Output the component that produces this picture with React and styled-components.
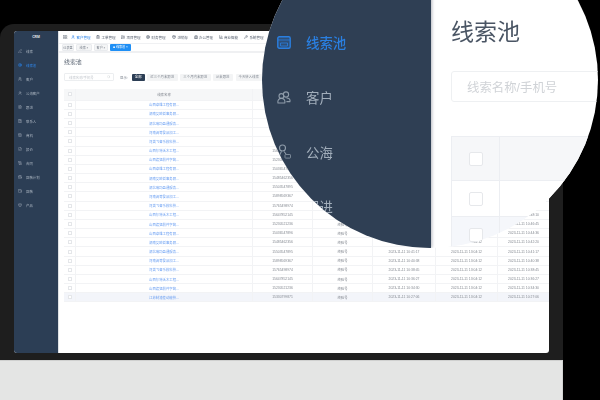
import React from "react";
import styled, { createGlobalStyle } from "styled-components";
import { Edit3, Target, Users, UserRound, FileText, Contact, Briefcase, FileCheck, ScrollText, CalendarClock, Wallet, Box, LayoutGrid, User, ClipboardList, FolderKanban, CircleDollarSign, Package, Building2, BarChart3, Wrench, Search } from "lucide-react";

const Global = createGlobalStyle`
  html, body { margin: 0; padding: 0; width: 600px; height: 400px; overflow: hidden; background: #000; }
  body { font-family: "Liberation Sans", "Noto Sans CJK SC", sans-serif; }
  * { box-sizing: border-box; }
`;

const Stage = styled.div`
  position: relative; width: 600px; height: 400px; overflow: hidden; background: #000;
  display: flex; flex-direction: column; padding-top: 24px;
`;
const Laptop = styled.div`
  width: 563px; height: 336px; flex: none; background: #1e1e1e; border-radius: 14px 14px 0 0;
  padding: 7px 14px;
`;
const Base = styled.div`
  width: 563px; flex: 1; background: #e4e5e4; border-top: 1px solid #cfd0cf; border-right: 1px solid #d2d3d2;
`;
const Screen = styled.div`
  width: 535px; height: 322px; display: flex; background: #fff; border-radius: 3px; overflow: hidden;
  filter: blur(0.5px);
`;
const Side = styled.div`
  width: 44px; flex: none; background: #2c3e55; padding-top: 3px; display: flex; flex-direction: column;
`;
const Logo = styled.div`
  height: 7px; line-height: 7px; font-size: 3.4px; font-weight: 700; color: #e6e9ee; text-align: center; margin-bottom: 3px;
`;
const SideItem = styled.div`
  height: 14px; display: flex; align-items: center; gap: 4px; padding-left: 4px; font-size: 3.4px;
  color: ${p => (p.$active ? "#2f86ea" : "#aab4c0")};
`;
const Main = styled.div`
  flex: 1; min-width: 0; display: flex; flex-direction: column; border-left: 1px solid #dfe1e4;
`;
const TopNav = styled.div`
  height: 12px; display: flex; align-items: center; padding-left: 4px; font-size: 3.5px; color: #5a6371; flex: none;
`;
const NavLink = styled.div`
  width: ${p => p.$w}px; display: flex; align-items: center; gap: 1.5px; flex: none;
  color: ${p => (p.$active ? "#2f86ea" : "#5a6371")};
`;
const Tags = styled.div`
  height: 10px; display: flex; align-items: center; padding-left: 3px; border-top: 1px solid #f0f1f3;
  border-bottom: 2px solid #eff0f2; flex: none;
`;
const Tag = styled.div`
  height: 7px; line-height: 7px; width: ${p => p.$w}px; margin-right: 2px; text-align: center; font-size: 3.1px; border-radius: 1px; flex: none;
  background: ${p => (p.$active ? "#1f8ff5" : "#f4f5f6")};
  color: ${p => (p.$active ? "#fff" : "#7a818c")};
  border: ${p => (p.$active ? "none" : "0.5px solid #e9ebee")};
`;
const Body = styled.div`
  padding: 5px 0 0 5px; display: flex; flex-direction: column;
`;
const Title = styled.div`
  font-size: 5.9px; line-height: 9px; color: #5a6472;
`;
const Filters = styled.div`
  margin-top: 6px; display: flex; align-items: center; height: 8px; font-size: 3.4px; color: #7a818c;
`;
const SearchBox = styled.div`
  width: 50px; height: 8px; border: 0.5px solid #eceef0; border-radius: 1px; color: #c5c9cf;
  display: flex; align-items: center; justify-content: space-between; padding: 0 3px 0 4px; margin-right: 6px;
`;
const Chip = styled.div`
  height: 7px; line-height: 7px; margin-left: ${p => p.$ml || 2}px; width: ${p => p.$w}px; text-align: center; border-radius: 1px; flex: none;
  background: ${p => (p.$active ? "#2c3e55" : "#f3f4f5")};
  color: ${p => (p.$active ? "#fff" : "#8a9099")};
`;
const Table = styled.div`
  margin-top: 8px; width: 486px;
`;
const Row = styled.div`
  display: grid; grid-template-columns: 12px 177px 60px 60px 63px 62px 52px;
  height: ${p => (p.$head ? "11.7px" : "9.18px")};
  background: ${p => (p.$head ? "#f6f7f8" : p.$hl ? "#f3f5fa" : "#fff")};
  border-bottom: 0.5px solid #f2f3f5;
`;
const Cell = styled.div`
  display: flex; align-items: center; justify-content: center; font-size: 3.4px; white-space: nowrap;
  border-right: 0.5px solid #f2f3f5; color: ${p => (p.$link ? "#6a9ff2" : "#858a92")};
`;
const Box1 = styled.span`
  width: 4px; height: 4px; border: 0.5px solid #e4e6e9; background: #fff; border-radius: 0.5px;
`;

const Lens = styled.div`
  position: absolute; left: 262px; top: -88px; width: 336px; height: 336px; border-radius: 50%; overflow: hidden;
  display: flex; background: #fff; filter: blur(0.35px);
`;
const LensSide = styled.div`
  width: 169px; flex: none; background: #2f3f54; padding: 103px 0 0 15px; box-shadow: 1px 0 3px rgba(40,50,70,.35);
`;
const LensItem = styled.div`
  height: 54.7px; display: flex; align-items: center; gap: 15px; font-size: 13.4px; font-weight: ${p => (p.$active ? 500 : 400)};
  color: ${p => (p.$active ? "#2a7fe0" : "#a2aebb")};
`;
const LensBody = styled.div`
  flex: 1; padding: 105px 0 0 20px; min-width: 0;
`;
const LensTitle = styled.div`
  font-size: 23px; line-height: 30px; color: #4a5564; white-space: nowrap;
`;
const LensInput = styled.div`
  margin-top: 24px; width: 200px; height: 31px; border: 1px solid #eef0f2; border-radius: 3px; padding-left: 15px;
  display: flex; align-items: center; font-size: 12.4px; color: #d0d3d7; white-space: nowrap;
`;
const LensTable = styled.div`
  margin-top: 34px; width: 200px; border-top: 1.5px solid #eceef2; border-left: 1.5px solid #eceef2;
`;
const LensRow = styled.div`
  height: ${p => p.$h}px; display: grid; grid-template-columns: 48px 1fr;
  background: ${p => p.$bg}; border-bottom: 1.5px solid #eceef2;
`;
const LensCheckCell = styled.div`
  display: flex; align-items: center; justify-content: center; border-right: 1.5px solid #eceef2;
`;
const LensCheck = styled.span`
  width: 14px; height: 14px; background: #fff; border: 1.5px solid #e6e8eb; border-radius: 2px;
`;

const sideItems = [
  ["线索", Edit3], ["线索池", Target, true], ["客户", Users], ["公海客户", UserRound], ["跟进", FileText], ["联系人", Contact],
  ["商机", Briefcase], ["报价", FileCheck], ["合同", ScrollText], ["回款计划", CalendarClock], ["回款", Wallet], ["产品", Box],
];
const navItems = [
  ["客户管理", User, 25, true], ["工单管理", ClipboardList, 25], ["项目管理", FolderKanban, 25], ["财务管理", CircleDollarSign, 26],
  ["进销存", Package, 21.5], ["办公管理", Building2, 25], ["商业智能", BarChart3, 25.4], ["系统管理", Wrench, 25],
];
const names = ["山西卓雄工程有限...", "湖南艾欧哲事务限...", "湖北瑞玛盈通服务...", "河南调等食品加工...", "河类飞奋乐模科技...", "山西尔特沃木工程...", "山西渡猛前件字筑..."];
const phones = ["15503547895", "15898569367", "15765498974", "15647852145", "15230521236", "15036547896", "15485462356"];
const t1 = ["10:48:10", "10:46:45", "10:44:36", "10:42:20", "10:41:17", "10:40:38", "10:38:45", "10:36:27", "10:34:30", "10:32:39", "10:31:28", "10:27:06"];
const rows = Array.from({ length: 22 }, (_, i) => {
  const last = i === 21;
  const time = last ? t1[11] : t1[i % 12];
  return {
    name: last ? "江苏制速差动能技..." : names[i % 7],
    phone: last ? "15330799871" : phones[(i + 5) % 7],
    a: `2023-11-11 ${time}`,
    b: "2023-11-11 13:04:12",
    c: `2023-11-11 ${time}`,
    hl: last,
    covered: i < 12,
  };
});

const PanelIcon = () => (
  <svg width="14" height="13" viewBox="0 0 14 13" fill="rgba(42,127,224,.25)" stroke="#2a7fe0" strokeWidth="1.4">
    <rect x=".8" y=".8" width="12.4" height="11.4" rx="1.5" />
    <path d="M.8 4h12.4M3.5 7h7v3h-7z" strokeWidth=".8" fill="none" />
  </svg>
);
const GroupIcon = () => (
  <svg width="14" height="13" viewBox="0 0 14 13" fill="none" stroke="#8f9caa" strokeWidth="1.1">
    <circle cx="9" cy="3.5" r="2.6" />
    <circle cx="4.4" cy="5" r="2.4" />
    <path d="M1 12c-.6-3 1-4.6 3.4-4.6S8.4 9 7.8 12zM9.5 7c2.4 0 4 1 3.4 3.6H9.4" />
  </svg>
);
const PinIcon = () => (
  <svg width="14" height="16" viewBox="0 0 14 16" fill="none" stroke="#8f9caa" strokeWidth="1.1">
    <circle cx="5.5" cy="4" r="3" />
    <path d="M4.5 7.2 1 14.5M7 7.5l2 2.5" />
    <rect x="8" y="10.5" width="5.5" height="3.6" rx=".6" strokeWidth=".8" />
  </svg>
);

export default function App() {
  return (
    <Stage>
      <Global />
      <Laptop>
        <Screen>
          <Side>
            <Logo>CRM</Logo>
            {sideItems.map(([label, Icon, active]) => (
              <SideItem key={label} $active={active}><Icon size={4} strokeWidth={2} />{label}</SideItem>
            ))}
          </Side>
          <Main>
            <TopNav>
              <NavLink $w={8}><LayoutGrid size={4.5} /></NavLink>
              {navItems.map(([label, Icon, w, active]) => (
                <NavLink key={label} $w={w} $active={active}><Icon size={4} strokeWidth={2.6} />{label}</NavLink>
              ))}
            </TopNav>
            <Tags>
              <Tag $w={12}>仪表盘</Tag><Tag $w={16}>线索 ×</Tag><Tag $w={14}>客户 ×</Tag><Tag $active $w={21}>■ 线索池 ×</Tag>
            </Tags>
            <Body>
              <Title>线索池</Title>
              <Filters>
                <SearchBox>线索名称/手机号<Search size={3.5} /></SearchBox>
                显示:
                <Chip $active $w={13} $ml={4}>全部</Chip>
                <Chip $w={31}>近三个月未跟进</Chip>
                <Chip $w={31}>三个月内未跟进</Chip>
                <Chip $w={20}>从未跟进</Chip>
                <Chip $w={26} $ml={3}>今天转入线索</Chip>
              </Filters>
              <Table>
                <Row $head>
                  <Cell><Box1 /></Cell><Cell>线索名称</Cell><Cell /><Cell /><Cell /><Cell /><Cell />
                </Row>
                {rows.map((r, i) => (
                  <Row key={i} $hl={r.hl}>
                    <Cell><Box1 /></Cell>
                    <Cell $link>{r.name}</Cell>
                    <Cell>{i > 4 ? r.phone : ""}</Cell>
                    <Cell>{r.covered ? "" : "终验号"}</Cell>
                    <Cell>{r.covered ? "" : r.a}</Cell>
                    <Cell>{r.covered ? "" : r.b}</Cell>
                    <Cell>{i < 9 ? "" : r.c}</Cell>
                  </Row>
                ))}
              </Table>
            </Body>
          </Main>
        </Screen>
      </Laptop>
      <Base />
      <Lens>
        <LensSide>
          <LensItem $active><PanelIcon />线索池</LensItem>
          <LensItem><GroupIcon />客户</LensItem>
          <LensItem><PinIcon />公海</LensItem>
          <LensItem><svg width="14" height="13" />跟进</LensItem>
        </LensSide>
        <LensBody>
          <LensTitle>线索池</LensTitle>
          <LensInput>线索名称/手机号</LensInput>
          <LensTable>
            <LensRow $h={44} $bg="#f6f7f9"><LensCheckCell><LensCheck /></LensCheckCell><div /></LensRow>
            <LensRow $h={36} $bg="#fff"><LensCheckCell><LensCheck /></LensCheckCell><div /></LensRow>
            <LensRow $h={36} $bg="#f5f7fb"><LensCheckCell><LensCheck /></LensCheckCell><div /></LensRow>
          </LensTable>
        </LensBody>
      </Lens>
    </Stage>
  );
}
